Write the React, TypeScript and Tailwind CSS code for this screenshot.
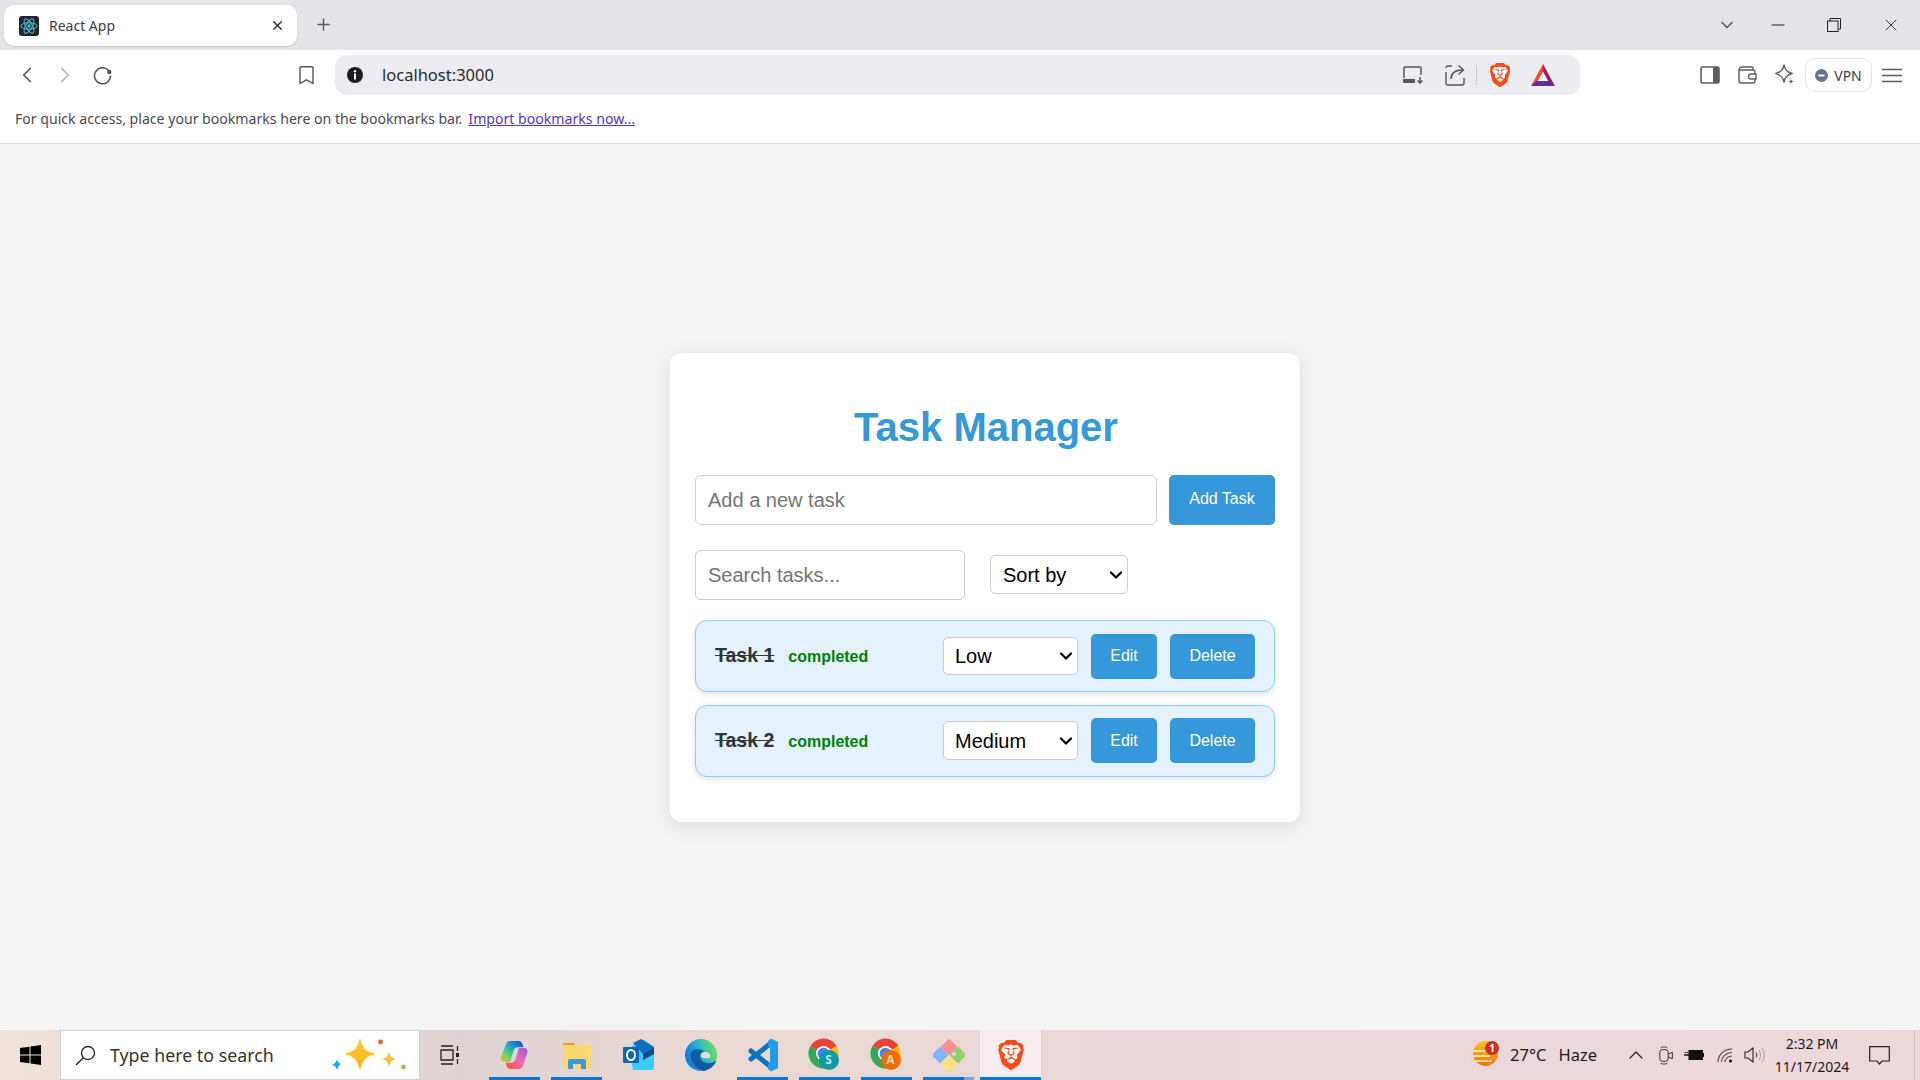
import { ChevronDown, ChevronLeft, ChevronRight, ChevronUp, Plus, X } from "lucide-react";
import { SiBrave } from "react-icons/si";

function BraveIcon({ size }: { size: number }) {
  return (
    <span className="relative flex items-center justify-center" style={{ width: size, height: size }}>
      <span className="absolute inset-[22%] rounded-full bg-white" />
      <SiBrave size={size} color="#fb4a14" className="relative" />
    </span>
  );
}

function ReactFavicon() {
  return (
    <svg width="20" height="20" viewBox="0 0 20 20">
      <rect width="20" height="20" rx="3" fill="#20232a" />
      <g fill="none" stroke="#4fc3dc" strokeWidth="1">
        <ellipse cx="10" cy="10" rx="8.2" ry="3.2" />
        <ellipse cx="10" cy="10" rx="8.2" ry="3.2" transform="rotate(60 10 10)" />
        <ellipse cx="10" cy="10" rx="8.2" ry="3.2" transform="rotate(120 10 10)" />
      </g>
      <circle cx="10" cy="10" r="1.7" fill="#4fc3dc" />
    </svg>
  );
}

function BatIcon() {
  return (
    <svg width="24" height="22" viewBox="0 0 24 22">
      <polygon points="12,0 24,22 17,17 12,8" fill="#9e1f63" />
      <polygon points="12,0 0,22 7,17 12,8" fill="#ff4724" />
      <polygon points="12,8 7,17 17,17" fill="#fff" />
      <polygon points="0,22 24,22 18.5,17 5.5,17" fill="#662d91" />
    </svg>
  );
}

function ChromeIcon({ badge, color }: { badge: string; color: string }) {
  return (
    <span className="relative block w-[36px] h-[36px]">
      <svg width="33" height="33" viewBox="0 0 48 48" className="absolute left-0 top-0">
        <path d="M5 13A22 22 0 0 1 43 13L24 24Z" fill="#ea4335" />
        <path d="M43 13A22 22 0 0 1 24 46L24 24Z" fill="#fbbc04" />
        <path d="M24 46A22 22 0 0 1 5 13L24 24Z" fill="#34a853" />
        <circle cx="24" cy="24" r="11" fill="#fff" />
        <circle cx="24" cy="24" r="8.5" fill="#4285f4" />
      </svg>
      <span
        className="absolute left-[12px] top-[13px] w-[20px] h-[20px] rounded-full flex items-center justify-center text-[12px] font-bold text-white/75"
        style={{ backgroundColor: color }}
      >
        {badge}
      </span>
    </span>
  );
}

function SparkleArt() {
  return (
    <svg width="82" height="38" viewBox="0 0 82 38">
      <defs>
        <linearGradient id="sparkle" x1="0" y1="0" x2="0" y2="1">
          <stop offset="0" stopColor="#ffd02e" />
          <stop offset="1" stopColor="#f9a825" />
        </linearGradient>
      </defs>
      <path d="M32 4C34 13 37 16 46 18C37 20 34 24 32 33C30 24 27 20 18 18C27 16 30 13 32 4Z" fill="url(#sparkle)" stroke="#ffc928" strokeWidth="1.5" strokeLinejoin="round" />
      <path d="M61 15C62 20 63 22 68 23C63 24 62 26 61 31C60 26 59 24 54 23C59 22 60 20 61 15Z" fill="url(#sparkle)" />
      <path d="M9 23C9.5 26 11 27 13 28C11 29 10 31 9 34C8.5 31 7 30 4 29C7 28 8.5 26 9 23Z" fill="#1ea7e8" />
      <circle cx="52.5" cy="6" r="2.4" fill="#f0602b" />
      <circle cx="75.5" cy="31" r="2.4" fill="#8ccb3f" />
    </svg>
  );
}

function Copilot() {
  return (
    <svg width="31" height="32" viewBox="0 0 40 40">
      <defs>
        <linearGradient id="copA" x1="0" y1="1" x2="1" y2="0">
          <stop offset="0" stopColor="#f6c915" />
          <stop offset="0.4" stopColor="#3fcf8e" />
          <stop offset="0.8" stopColor="#1b6fe0" />
          <stop offset="1" stopColor="#1a3fc0" />
        </linearGradient>
        <linearGradient id="copB" x1="1" y1="0" x2="0" y2="1">
          <stop offset="0" stopColor="#9a5be8" />
          <stop offset="0.5" stopColor="#f06ab0" />
          <stop offset="1" stopColor="#f4552a" />
        </linearGradient>
      </defs>
      <path d="M14 2h11c3 0 4.500 2 5.500 4.500l1 3.500h-7c-3 0-5 2-6 5l-4 14H7c-4 0-5.500-3-4.500-6.500L9 6c1-2.500 3-4 5-4z" fill="url(#copA)" />
      <path d="M26 38H15c-3 0-4.500-2-5.500-4.500l-1-3.500h7c3 0 5-2 6-5l4-14h6.500c4 0 5.500 3 4.500 6.500L31 34c-1 2.500-3 4-5 4z" fill="url(#copB)" />
    </svg>
  );
}

function Explorer() {
  return (
    <svg width="28" height="28" viewBox="0 0 28 28">
      <path d="M0 2h11l2 3H0z" fill="#dfa21e" />
      <rect x="0" y="4" width="28" height="24" rx="1" fill="#fdd76f" />
      <path d="M5 28V20a2 2 0 0 1 2-2h14a2 2 0 0 1 2 2v8h-5v-5h-8v5z" fill="#3f96d8" />
    </svg>
  );
}

function Outlook() {
  return (
    <svg width="31" height="32" viewBox="0 0 31 32">
      <path d="M6 9L18 1h3l10 7v20a3 3 0 0 1-3 3H10z" fill="#3ccbf4" />
      <path d="M10 4L18 0l13 8L20 15z" fill="#0f6cbd" />
      <path d="M20 15L31 8v7l-11 6z" fill="#064a8c" />
      <rect x="0" y="8" width="16" height="16" rx="1" fill="#0a66c2" />
      <ellipse cx="8" cy="16" rx="4" ry="5" fill="none" stroke="#fff" strokeWidth="2" />
    </svg>
  );
}

function Edge() {
  return (
    <svg width="32" height="32" viewBox="0 0 40 40">
      <defs>
        <linearGradient id="edgeA" x1="0.9" y1="0.3" x2="0.1" y2="0.6">
          <stop offset="0" stopColor="#5fd96b" />
          <stop offset="0.5" stopColor="#27b8c9" />
          <stop offset="1" stopColor="#0f7fd6" />
        </linearGradient>
      </defs>
      <circle cx="20" cy="20" r="20" fill="url(#edgeA)" />
      <path d="M7 20C7 31 15 39 24 39.6C33 38 38 32 39 27C33 32 25 31 21 27C17 23 19 17 24 15C15 11 7 13 7 20Z" fill="#0d5aa7" />
      <path d="M22 17C27 15 32 18 32 23C28 25 22 25 20 22C19 20 20 18 22 17Z" fill="#e9d9d3" />
    </svg>
  );
}

function VsCode() {
  return (
    <svg width="30" height="34" viewBox="0 0 30 34">
      <path d="M3 21L23 5" stroke="#0a72c2" strokeWidth="5" strokeLinecap="round" />
      <path d="M3 13L23 29" stroke="#0a72c2" strokeWidth="5" strokeLinecap="round" />
      <path d="M20 3L23 0.5L30 4V30L23 33.5L20 31L20 26L24 23V11L20 8Z" fill="#1f9cf0" />
      <path d="M22 1.5L30 4V30L22 32.5Z" fill="#1f9cf0" />
    </svg>
  );
}

function GitApp() {
  return (
    <svg width="32" height="32" viewBox="0 0 32 32">
      <rect x="10" y="2" width="12" height="12" rx="1.5" transform="rotate(45 16 8)" fill="#ff8e92" />
      <rect x="1" y="10" width="12" height="12" rx="1.5" transform="rotate(45 7 16)" fill="#7eb6ff" />
      <rect x="19" y="10" width="12" height="12" rx="1.5" transform="rotate(45 25 16)" fill="#8fd267" />
      <rect x="10" y="19" width="12" height="12" rx="1.5" transform="rotate(45 16 25)" fill="#ffe27d" />
      <circle cx="21" cy="15" r="2" fill="#e9d9d9" />
    </svg>
  );
}

function TaskbarApp({ active, children, split }: { active?: boolean; children: React.ReactNode; split?: boolean }) {
  return (
    <div className={`relative w-[51px] h-full flex items-center justify-center ${split ? "mr-[6px]" : "mr-[11px]"}`}>
      {children}
      {active && <span className="absolute bottom-0 left-0 right-0 h-[3px] bg-[#0078d4]" />}
      {split && <span className="absolute bottom-0 right-0 w-[10px] h-[3px] bg-[#6fa8dc]" />}
    </div>
  );
}

function TaskRow({ name, priority, selectHeight, buttonTop }: { name: string; priority: string; selectHeight: string; buttonTop: string }) {
  return (
    <div className="h-[72px] flex items-center pl-[19px] pr-[19px] bg-[#e3f2fd] border border-[#90caf9] rounded-[12px] shadow-[0_2px_6px_rgba(0,0,0,0.12)]">
      <span className="pt-[1px] text-[19.5px] font-bold text-[#333333] line-through">{name}</span>
      <span className="ml-[14px] pt-[3px] text-[16px] font-bold text-[#008000]">completed</span>
      <div className="ml-auto relative flex items-center">
        <select
          defaultValue={priority}
          className={`appearance-none w-[135px] ${selectHeight} pl-[11px] text-[20px] text-black bg-white border border-[#cccccc] rounded-[5px]`}
        >
          <option>Low</option>
          <option>Medium</option>
          <option>High</option>
        </select>
        <ChevronDown size={20} strokeWidth={2.6} className="absolute right-[2px] text-black pointer-events-none" />
      </div>
      <button className={`ml-[13px] w-[66px] h-[45px] ${buttonTop} text-[16px] text-white bg-[#3498db] rounded-[5px]`}>Edit</button>
      <button className={`ml-[13px] w-[85px] h-[45px] ${buttonTop} text-[16px] text-white bg-[#3498db] rounded-[5px]`}>Delete</button>
    </div>
  );
}

export default function App() {
  return (
    <div className="w-[1920px] h-[1080px] flex flex-col overflow-hidden bg-[#f4f4f4] font-['Noto_Sans',sans-serif]">
      {/* Tab strip */}
      <div className="h-[50px] flex items-start bg-[#e3e3e8] text-[#3c3c43]">
        <div className="mt-[5px] ml-[4px] w-[293px] h-[41px] flex items-center pl-[15px] pr-[12px] bg-white rounded-[10px] shadow-[0_1px_2px_rgba(0,0,0,0.12)]">
          <ReactFavicon />
          <span className="ml-[10px] text-[14px]">React App</span>
          <X size={15} strokeWidth={2.5} className="ml-auto text-[#3b3b3b]" />
        </div>
        <Plus size={19} strokeWidth={1.75} className="ml-[17px] mt-[15px] text-[#55555c]" />
        <div className="ml-auto flex items-center h-[50px] pr-[19px]">
          <ChevronDown size={20} strokeWidth={2} className="text-[#55555c]" />
          <svg width="14" height="14" viewBox="0 0 14 14" className="ml-[34px]">
            <path d="M0.5 7H13.5" stroke="#222" strokeWidth="1" />
          </svg>
          <svg width="14" height="14" viewBox="0 0 14 14" className="ml-[42px]">
            <rect x="0.5" y="3" width="10.5" height="10.5" fill="none" stroke="#222" />
            <path d="M3 3V0.5H13.5V11H11" fill="none" stroke="#222" />
          </svg>
          <X size={20} strokeWidth={1.1} className="ml-[40px] text-[#222]" />
        </div>
      </div>

      {/* Toolbar */}
      <div className="h-[45px] pt-[5px] flex items-center bg-white text-[#55555c]">
        <div className="ml-[8px] w-[38px] flex justify-center">
          <ChevronLeft size={26} strokeWidth={1.6} />
        </div>
        <div className="w-[38px] flex justify-center text-[#b5b5bb]">
          <ChevronRight size={26} strokeWidth={1.6} />
        </div>
        <div className="w-[36px] flex justify-center">
          <svg width="19" height="19" viewBox="0 0 19 19">
            <path d="M15.500 4.500A8 8 0 1 0 17.500 9.500" fill="none" stroke="#55555c" strokeWidth="1.500" />
            <circle cx="16.300" cy="6" r="2.200" fill="#55555c" />
          </svg>
        </div>
        <div className="ml-[167px] w-[38px] flex justify-center">
          <svg width="15" height="19" viewBox="0 0 15 19">
            <path d="M1 2a1.3 1.3 0 0 1 1.3-1.3h10.4A1.3 1.3 0 0 1 14 2v15.5l-6.5-3.7L1 17.5z" fill="none" stroke="#55555c" strokeWidth="1.4" strokeLinejoin="round" />
          </svg>
        </div>
        <div className="ml-[10px] w-[1245px] h-[40px] flex items-center pl-[11px] pr-[18px] rounded-[12px] bg-[#edecf1]">
          <svg width="18" height="18" viewBox="0 0 18 18">
            <circle cx="9" cy="9" r="8" fill="#1c1b22" />
            <rect x="8" y="7.5" width="2" height="6" fill="#fff" />
            <circle cx="9" cy="5.2" r="1.2" fill="#fff" />
          </svg>
          <span className="ml-[18px] text-[16.5px] text-[#2b2b33]">localhost:3000</span>
          <div className="ml-auto flex items-center">
            <div className="w-[38px] flex justify-center">
              <svg width="22" height="18" viewBox="0 0 22 18">
                <path d="M2 12V2a1 1 0 0 1 1-1h15a1 1 0 0 1 1 1v7" fill="none" stroke="#55555c" strokeWidth="1.5" />
                <path d="M1 13h12v3a1 1 0 0 1-1 1H2a1 1 0 0 1-1-1z" fill="#55555c" />
                <path d="M18 11v6M15.5 14.5L18 17l2.5-2.5" fill="none" stroke="#55555c" strokeWidth="1.5" />
              </svg>
            </div>
            <div className="ml-[4px] w-[38px] flex justify-center">
              <svg width="20" height="22" viewBox="0 0 20 22">
                <path d="M7 2H3a2 2 0 0 0-2 2v0M1 8v11a2 2 0 0 0 2 2h14a2 2 0 0 0 2-2v-5" fill="none" stroke="#55555c" strokeWidth="1.4" />
                <path d="M6 15c0-6 4-9 12-9M13.5 1.5L18.5 6l-5 4.5" fill="none" stroke="#55555c" strokeWidth="1.4" />
              </svg>
            </div>
            <div className="ml-[2px] w-px h-[20px] bg-[#c9c9cf]" />
            <div className="ml-[4px] w-[38px] flex justify-center">
              <BraveIcon size={24} />
            </div>
            <div className="ml-[5px] w-[38px] flex justify-center">
              <BatIcon />
            </div>
          </div>
        </div>
        <div className="ml-[111px] w-[37px] flex justify-center">
          <svg width="20" height="18" viewBox="0 0 20 18">
            <rect x="1" y="1" width="18" height="16" rx="1.5" fill="#fff" stroke="#5c5c63" strokeWidth="1.6" />
            <rect x="13" y="1" width="6" height="16" fill="#5c5c63" />
          </svg>
        </div>
        <div className="w-[38px] flex justify-center">
          <svg width="19" height="18" viewBox="0 0 19 18">
            <path d="M1 4a3 3 0 0 1 3-3h10a1 1 0 0 1 1 1v2H1zM1 4v11a2 2 0 0 0 2 2h12a2 2 0 0 0 2-2V6a2 2 0 0 0-2-2" fill="none" stroke="#5c5c63" strokeWidth="1.4" />
            <path d="M18 8h-5a2 2 0 0 0 0 5h5z" fill="#fff" stroke="#5c5c63" strokeWidth="1.4" />
          </svg>
        </div>
        <div className="w-[38px] flex justify-center">
          <svg width="20" height="22" viewBox="0 0 20 22">
            <path d="M9 1C10 6 12 8 17 9.500C12 11 10 13 9 18C8 13 6 11 1 9.500C6 8 8 6 9 1Z" fill="none" stroke="#5c5c63" strokeWidth="1.5" strokeLinejoin="round" />
            <path d="M16 14.500C16.300 16.500 17 17.200 19 17.500C17 17.800 16.300 18.500 16 20.500C15.700 18.500 15 17.800 13 17.500C15 17.200 15.700 16.500 16 14.500Z" fill="#5c5c63" />
          </svg>
        </div>
        <div className="ml-[1px] w-[67px] h-[34px] flex items-center justify-center gap-[6px] border border-[#e6e6ea] rounded-[10px]">
          <svg width="13" height="13" viewBox="0 0 13 13">
            <circle cx="6.500" cy="6.500" r="6.500" fill="#6b7096" />
            <rect x="3.500" y="5.500" width="6" height="2" fill="#fff" />
          </svg>
          <span className="text-[14px] text-[#3c3c43]">VPN</span>
        </div>
        <div className="ml-[1px] w-[38px] flex justify-center">
          <svg width="20" height="15" viewBox="0 0 20 15">
            <path d="M0 1.500H20M0 7.500H20M0 13.500H20" stroke="#5c5c63" strokeWidth="1.4" />
          </svg>
        </div>
      </div>

      {/* Bookmarks bar */}
      <div className="h-[49px] shrink-0 flex items-center pl-[15px] bg-white border-b border-[#d9d9d9] text-[14.1px] text-[#4a4a52]">
        <span>For quick access, place your bookmarks here on the bookmarks bar.</span>
        <span className="ml-[6px] text-[#4f35d8] underline">Import bookmarks now...</span>
      </div>

      {/* Page */}
      <div className="flex-1 flex items-center justify-center pl-[50px] font-['Liberation_Sans',Arial,sans-serif]">
        <div className="w-[630px] h-[469px] px-[25px] pt-[51px] bg-white rounded-[12px] shadow-[0_4px_20px_rgba(0,0,0,0.1)]">
          <h1 className="h-[46px] pl-[2px] text-[40px] leading-[46px] font-bold text-center text-[#3498db]">Task Manager</h1>
          <div className="mt-[25px] flex gap-[12px]">
            <input
              placeholder="Add a new task"
              className="w-[462px] h-[50px] px-[12px] pt-[2px] text-[20px] bg-white border border-[#cccccc] rounded-[6px] placeholder:text-[#757575] outline-none"
            />
            <button className="w-[106px] h-[50px] pb-[1px] text-[16px] text-white bg-[#3498db] rounded-[5px]">Add Task</button>
          </div>
          <div className="mt-[25px] flex items-center">
            <input
              placeholder="Search tasks..."
              className="w-[270px] h-[50px] px-[12px] pt-[2px] text-[20px] bg-white border border-[#cccccc] rounded-[6px] placeholder:text-[#757575] outline-none"
            />
            <div className="ml-[25px] relative flex items-center">
              <select defaultValue="Sort by" className="appearance-none w-[138px] h-[39px] pl-[12px] text-[20px] text-black bg-white border border-[#cccccc] rounded-[5px]">
                <option>Sort by</option>
                <option>Priority</option>
                <option>Status</option>
              </select>
              <ChevronDown size={20} strokeWidth={2.6} className="absolute right-[2px] text-black pointer-events-none" />
            </div>
          </div>
          <div className="mt-[20px] flex flex-col gap-[13px]">
            <TaskRow name="Task 1" priority="Low" selectHeight="h-[38px]" buttonTop="mt-[1px]" />
            <TaskRow name="Task 2" priority="Medium" selectHeight="h-[39px]" buttonTop="mt-0" />
          </div>
        </div>
      </div>

      {/* Windows taskbar */}
      <div className="h-[50px] shrink-0 flex items-center bg-[linear-gradient(90deg,#efe2d9_0%,#e0d3d5_24%,#ead9d2_40%,#e9d6da_58%,#edd8dc_100%)] text-[#1a1a1a]">
        <div className="w-[60px] flex justify-center">
          <svg width="21" height="20" viewBox="0 0 21 20">
            <polygon points="0,3 9.500,1.700 9.500,9.500 0,9.500" fill="#000" />
            <polygon points="10.500,1.500 21,0 21,9.500 10.500,9.500" fill="#000" />
            <polygon points="0,10.500 9.500,10.500 9.500,18.300 0,17" fill="#000" />
            <polygon points="10.500,10.500 21,10.500 21,20 10.500,18.500" fill="#000" />
          </svg>
        </div>
        <div className="w-[360px] h-full flex items-center pl-[14px] pr-[9px] bg-white border border-[#cfcfcf]">
          <svg width="21" height="21" viewBox="0 0 21 21">
            <circle cx="13" cy="8" r="6.500" fill="none" stroke="#222" strokeWidth="1.3" />
            <path d="M8.500 12.500L1 20" stroke="#222" strokeWidth="1.500" />
          </svg>
          <span className="ml-[14px] text-[17.8px] text-[#333]">Type here to search</span>
          <span className="ml-auto flex">
            <SparkleArt />
          </span>
        </div>
        <div className="ml-[19px] w-[22px] flex justify-center mr-[28px]">
          <svg width="21" height="20" viewBox="0 0 21 20">
            <path d="M1 1H13M1 19H13M1 5H13V15H1ZM17.500 1V6M17.500 14V19" fill="none" stroke="#222" strokeWidth="1.300" />
            <rect x="16" y="8" width="3" height="4" fill="#222" />
          </svg>
        </div>
        <TaskbarApp active><Copilot /></TaskbarApp>
        <TaskbarApp active><Explorer /></TaskbarApp>
        <TaskbarApp><Outlook /></TaskbarApp>
        <TaskbarApp><Edge /></TaskbarApp>
        <TaskbarApp active><VsCode /></TaskbarApp>
        <TaskbarApp active><ChromeIcon badge="S" color="#0f9aa8" /></TaskbarApp>
        <TaskbarApp active><ChromeIcon badge="A" color="#ef6c00" /></TaskbarApp>
        <TaskbarApp active split><GitApp /></TaskbarApp>
        <div className="relative w-[61px] h-full flex items-center justify-center bg-[#f6ebef]">
          <BraveIcon size={30} />
          <span className="absolute bottom-0 left-0 right-0 h-[3px] bg-[#0078d4]" />
        </div>

        {/* Tray */}
        <div className="ml-auto flex items-center h-full">
          <div className="relative w-[30px] h-[30px] mr-[10px]">
            <span className="absolute left-[3px] top-[1px] w-[25px] h-[25px] rounded-full bg-gradient-to-b from-[#fcc419] to-[#f4700c]" />
            <span className="absolute left-0 top-[10px] w-[18px] h-[2px] bg-[#f7e3a3]" />
            <span className="absolute left-[2px] top-[15px] w-[18px] h-[2px] bg-[#f7e3a3]" />
            <span className="absolute left-0 top-[20px] w-[22px] h-[2px] bg-[#e8d3a6]" />
            <span className="absolute left-[15px] top-[1px] w-[14px] h-[14px] rounded-full bg-[#cf2f1f] text-white text-[10px] leading-[14px] text-center font-bold">1</span>
          </div>
          <span className="text-[16.5px]">27°C</span>
          <span className="ml-[12px] text-[16.5px]">Haze</span>
          <ChevronUp size={24} strokeWidth={1.2} className="ml-[27px] text-[#222]" />
          <svg width="15" height="19" viewBox="0 0 18 22" className="ml-[11px]">
            <rect x="1" y="4" width="10" height="14" rx="3" fill="none" stroke="#222" strokeWidth="1.100" />
            <path d="M11 9.500L16 7V15L11 12.500" fill="none" stroke="#222" strokeWidth="1.100" />
            <path d="M2 1.500C4 0.500 8 0.500 10 1.500M2 20.500C4 21.500 8 21.500 10 20.500" fill="none" stroke="#222" />
          </svg>
          <svg width="20" height="12" viewBox="0 0 20 12" className="ml-[10px]">
            <rect x="5" y="1.500" width="13.500" height="9" fill="#111" stroke="#111" />
            <rect x="18.500" y="4" width="1.500" height="4" fill="#111" />
            <path d="M0 6H5M1.500 3V4M3.500 3V4" stroke="#111" strokeWidth="1.500" />
          </svg>
          <svg width="16" height="15" viewBox="0 0 16 15" className="ml-[13px]">
            <path d="M1 14C1 7 7 1 15 1M4.500 14C4.500 9 9 4.500 15 4.500M8 14C8 11 11 8 15 8" fill="none" stroke="#444" strokeWidth="1.100" />
            <circle cx="13.500" cy="13" r="1.500" fill="#111" />
          </svg>
          <svg width="21" height="16" viewBox="0 0 21 16" className="ml-[11px]">
            <path d="M1 5H4L9 1V15L4 11H1Z" fill="none" stroke="#222" strokeWidth="1.100" />
            <path d="M12 5.500C13 7 13 9 12 10.500" fill="none" stroke="#333" />
            <path d="M15 3C17 6 17 10 15 13M18 1C21 5 21 11 18 15" fill="none" stroke="#a8a0a2" />
          </svg>
          <div className="ml-[5px] w-[84px] flex flex-col items-center text-[14px] leading-[23px]">
            <span>2:32 PM</span>
            <span>11/17/2024</span>
          </div>
          <svg width="21" height="19" viewBox="0 0 21 19" className="ml-[15px]">
            <path d="M0.700 0.700H20.300V15H13L10.500 18L8 15H0.700Z" fill="none" stroke="#222" strokeWidth="1.200" />
          </svg>
          <span className="ml-[24px] w-px h-full bg-[#cdbcc0]" />
          <span className="w-[5px]" />
        </div>
      </div>
    </div>
  );
}
